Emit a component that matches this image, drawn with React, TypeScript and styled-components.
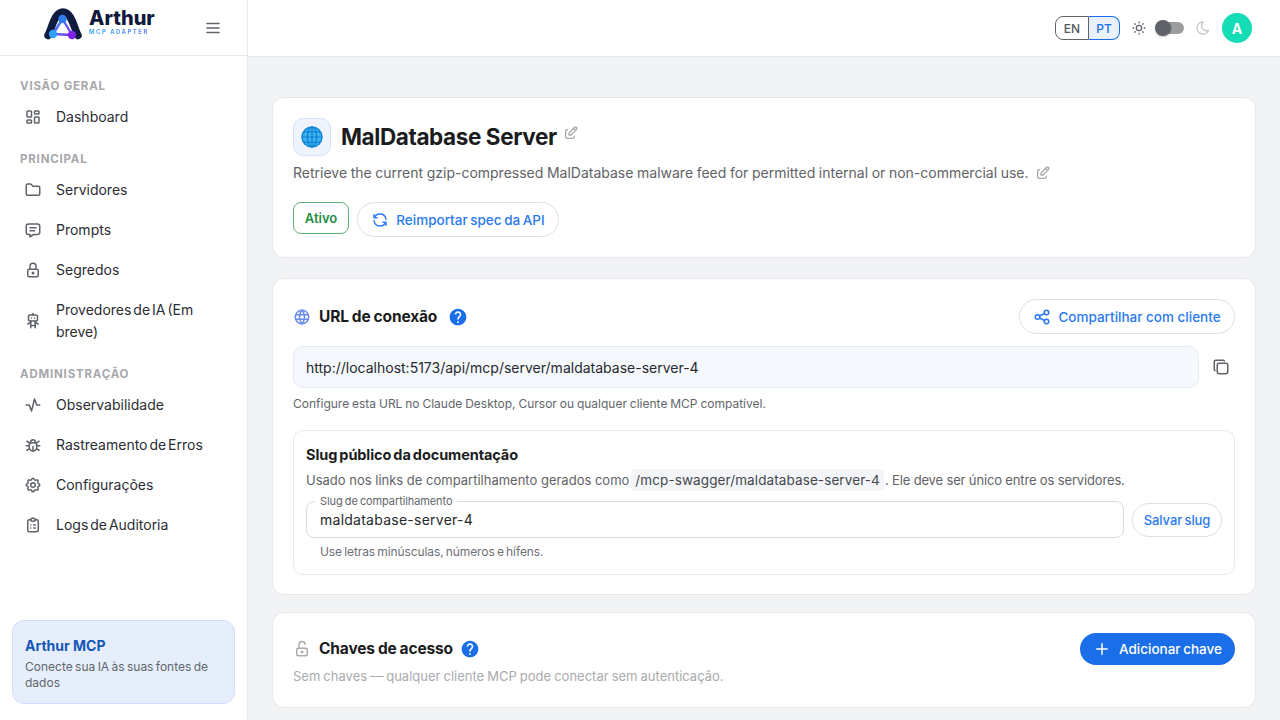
import React from 'react';
import styled, { createGlobalStyle } from 'styled-components';
import {
    TbLayoutDashboard, TbFolder, TbMessage, TbLock, TbRobot, TbActivity, TbBug, TbSettings,
    TbClipboardList, TbMenu2, TbSun, TbMoon, TbEdit, TbRefresh, TbWorld, TbShare, TbCopy, TbLockOpen, TbPlus,
} from 'react-icons/tb';
import { MdHelp } from 'react-icons/md';

const GlobalStyle = createGlobalStyle`
* { box-sizing: border-box; }
html, body { margin: 0; height: 720px; overflow: hidden; }
body { font-family: Inter, "Liberation Sans", sans-serif; background: #f2f3f5; color: #1a1c20; }
`;

const Page = styled.div`
display: flex;
height: 720px;
`;

const Sidebar = styled.aside`
width: 248px;
flex: none;
display: flex;
flex-direction: column;
background: #fff;
border-right: 1px solid #e5e7ea;
`;

const Brand = styled.div`
height: 56px;
flex: none;
display: flex;
align-items: center;
padding: 0 25px 8px 44px;
border-bottom: 1px solid #e5e7ea;
color: #5f6368;
`;

const BrandText = styled.div`
margin: -3px 0 0 7px;
display: flex;
flex-direction: column;
flex: 1;
`;

const BrandName = styled.div`
font-size: 20px;
line-height: 19px;
font-weight: 800;
color: #111a3d;
`;

const BrandSub = styled.div`
font-size: 6px;
line-height: 7px;
font-weight: 700;
letter-spacing: 1.45px;
white-space: nowrap;
background: linear-gradient(90deg, #38a4f8, #8a5cf6);
-webkit-background-clip: text;
background-clip: text;
color: transparent;
`;

const MenuIcon = styled(TbMenu2)`
flex: none;
font-size: 18px;
margin-bottom: -8px;
`;

const Nav = styled.nav`
flex: 1;
padding-top: 19px;
display: flex;
flex-direction: column;
`;

const NavLabel = styled.div`
font-size: 11.5px;
line-height: 22px;
font-weight: 700;
letter-spacing: 0.8px;
color: #a6a8ab;
padding-left: 20px;
&:not(:first-child) { margin-top: 11px; }
`;

const NavItem = styled.a`
display: flex;
align-items: center;
min-height: 40px;
padding: 0 24px;
font-size: 14px;
line-height: 22px;
word-spacing: -2px;
color: #2b2d33;
svg { flex: none; font-size: 18px; color: #5f6368; margin-right: 14px; }
`;

const TallNavItem = styled(NavItem)`
padding-top: 9px;
padding-bottom: 9px;
`;

const Promo = styled.div`
margin: 0 12px 16px;
height: 84px;
padding: 16px 12px 0;
background: #e6eefc;
border: 1px solid #cfdefa;
border-radius: 12px;
`;

const PromoTitle = styled.div`
font-size: 14px;
line-height: 18px;
font-weight: 700;
color: #1557b8;
`;

const PromoText = styled.div`
margin-top: 4px;
font-size: 12px;
line-height: 16px;
word-spacing: -1px;
color: #62666c;
`;

const Content = styled.div`
flex: 1;
min-width: 0;
display: flex;
flex-direction: column;
`;

const TopBar = styled.header`
height: 57px;
flex: none;
display: flex;
align-items: center;
justify-content: flex-end;
padding-right: 28px;
background: #fff;
border-bottom: 1px solid #e5e7ea;
`;

const LangGroup = styled.div`
display: flex;
margin-right: 11px;
`;

const LangButton = styled.span<{ $active?: boolean }>`
height: 24px;
display: flex;
align-items: center;
justify-content: center;
font-size: 12px;
font-weight: 500;
width: ${p => (p.$active ? '31px' : '34px')};
color: ${p => (p.$active ? '#1a6fe8' : '#555a60')};
background: ${p => (p.$active ? '#e9f1fd' : '#fff')};
border: 1px solid ${p => (p.$active ? '#1a6fe8' : '#5f6368')};
border-radius: ${p => (p.$active ? '0 8px 8px 0' : '8px 0 0 8px')};
${p => (p.$active ? 'border-left: 0;' : '')}
`;

const ThemeIcon = styled.span<{ $muted?: boolean }>`
display: flex;
font-size: 16px;
color: ${p => (p.$muted ? '#c4c6c9' : '#5f6368')};
`;

const Toggle = styled.span`
position: relative;
width: 24px;
height: 12px;
margin: 0 11px 0 13px;
background: #9b9d9f;
border-radius: 6px;
`;

const Thumb = styled.span`
position: absolute;
left: -5px;
top: -2px;
width: 16px;
height: 16px;
border-radius: 50%;
background: #5f6368;
box-shadow: 0 1px 2px rgba(0, 0, 0, 0.25);
`;

const Avatar = styled.span`
width: 30px;
height: 30px;
margin-left: 11px;
border-radius: 50%;
display: flex;
align-items: center;
justify-content: center;
background: #14dcb4;
color: #fff;
font-size: 14px;
font-weight: 700;
`;

const Main = styled.main`
flex: 1;
padding: 40px 24px 0;
display: flex;
flex-direction: column;
overflow: hidden;
`;

const Card = styled.section<{ $height: number; $gap: number }>`
flex: none;
height: ${p => p.$height}px;
margin-bottom: ${p => p.$gap}px;
padding: 20px;
background: #fff;
border: 1px solid #e6e8eb;
border-radius: 12px;
`;

const TitleRow = styled.div`
display: flex;
align-items: center;
`;

const GlobeBox = styled.div`
width: 38px;
height: 38px;
display: flex;
align-items: center;
justify-content: center;
background: #eef3fe;
border: 1px solid #d6e2fb;
border-radius: 10px;
`;

const ServerName = styled.h1`
margin: 0 0 0 10px;
font-size: 22.5px;
line-height: 38px;
font-weight: 700;
letter-spacing: -0.4px;
color: #1a1c20;
`;

const EditIcon = styled(TbEdit)`
flex: none;
font-size: 16px;
color: #a9abae;
`;

const TitleEdit = styled(EditIcon)`
margin: -8px 0 0 6px;
`;

const Description = styled.p`
margin: 6px 0 0;
display: flex;
align-items: center;
font-size: 14px;
line-height: 22px;
word-spacing: -0.35px;
color: #5f6368;
svg { margin-left: 6px; }
`;

const ChipRow = styled.div`
display: flex;
align-items: flex-start;
gap: 8px;
margin-top: 18px;
`;

const StatusChip = styled.span`
width: 56px;
height: 32px;
display: flex;
align-items: center;
justify-content: center;
border: 1px solid #5bb27a;
border-radius: 8px;
color: #1f8f45;
font-size: 13px;
font-weight: 600;
`;

const OutlineButton = styled.button<{ $width: number; $tight?: boolean }>`
width: ${p => p.$width}px;
height: 35px;
flex: none;
display: flex;
align-items: center;
justify-content: center;
gap: 7px;
padding: 0;
font: inherit;
font-size: 13.5px;
font-weight: 500;
word-spacing: ${p => (p.$tight ? '-1px' : '0')};
color: #2a7af0;
background: #fff;
border: 1px solid #dcdfe3;
border-radius: 18px;
svg { font-size: 18px; flex: none; }
`;

const SectionHead = styled.div`
display: flex;
align-items: center;
justify-content: space-between;
height: 35px;
`;

const SectionTitle = styled.h2`
margin: 0;
display: flex;
align-items: center;
font-size: 15.5px;
line-height: 22px;
font-weight: 700;
letter-spacing: -0.15px;
word-spacing: -0.5px;
color: #1a1c20;
`;

const SectionIcon = styled.span<{ $color: string }>`
display: flex;
width: 18px;
margin-right: 8px;
font-size: 18px;
color: ${p => p.$color};
`;

const HelpIcon = styled(MdHelp)<{ $gap: number }>`
margin-left: ${p => p.$gap}px;
font-size: 20px;
color: #1a6fe8;
`;

const UrlRow = styled.div`
display: flex;
align-items: center;
margin-top: 12px;
`;

const UrlBox = styled.div`
flex: 1;
height: 42px;
display: flex;
align-items: center;
padding: 0 12px;
background: #f5f8fd;
border: 1px solid #e6eaf2;
border-radius: 10px;
font-size: 14px;
color: #26282c;
`;

const CopyBox = styled.span`
width: 36px;
display: flex;
justify-content: flex-end;
padding-right: 5px;
font-size: 18px;
color: #5f6368;
`;

const Hint = styled.p`
margin: 7px 0 0;
font-size: 12px;
line-height: 18px;
word-spacing: -0.5px;
color: #62666c;
`;

const SlugPanel = styled.div`
margin-top: 17px;
height: 145px;
padding: 13px 12px 0;
border: 1px solid #e8eaed;
border-radius: 10px;
`;

const SlugTitle = styled.h3`
margin: 0;
font-size: 14.5px;
line-height: 22px;
font-weight: 700;
letter-spacing: -0.1px;
word-spacing: -1.2px;
color: #1a1c20;
`;

const SlugText = styled.p`
margin: 3px 0 0;
display: flex;
align-items: center;
font-size: 13px;
line-height: 22px;
color: #5f6368;
`;

const Code = styled.code`
margin: 0 1px 0 2px;
padding: 0 4px;
font-family: inherit;
font-size: 13.5px;
letter-spacing: 0.1px;
background: #f3f5f8;
border-radius: 4px;
color: #44474c;
`;

const SlugTail = styled.span`
letter-spacing: -0.15px;
`;

const SlugRow = styled.div`
display: flex;
align-items: center;
gap: 8px;
margin-top: 10px;
`;

const SlugField = styled.div`
position: relative;
flex: 1;
height: 37px;
display: flex;
align-items: center;
padding: 0 13px;
border: 1px solid #d9dbde;
border-radius: 8px;
font-size: 14px;
letter-spacing: 0.25px;
color: #26282c;
`;

const FloatLabel = styled.label`
position: absolute;
left: 8px;
top: -8px;
padding: 0 5px;
background: #fff;
font-size: 11px;
line-height: 14px;
letter-spacing: -0.1px;
word-spacing: -0.8px;
color: #62666c;
`;

const SaveButton = styled(OutlineButton)`
height: 34px;
font-size: 13px;
letter-spacing: -0.1px;
word-spacing: -1px;
border-radius: 17px;
`;

const SlugHelp = styled.p`
margin: 5px 0 0 14px;
font-size: 12px;
line-height: 18px;
letter-spacing: -0.1px;
word-spacing: -1px;
color: #6d7075;
`;

const KeysHead = styled(SectionHead)`
height: 32px;
`;

const AddButton = styled.button`
width: 155px;
height: 32px;
display: flex;
align-items: center;
justify-content: center;
gap: 8px;
padding: 0;
font: inherit;
font-size: 13.5px;
font-weight: 500;
word-spacing: -1px;
color: #fff;
background: #1a6fe8;
border: 0;
border-radius: 16px;
svg { font-size: 18px; }
`;

const MutedLine = styled.p`
margin: 0;
font-size: 13px;
line-height: 22px;
word-spacing: -0.6px;
color: #a9abae;
`;

function LogoMark() {
    return (
        <svg width="38" height="32" viewBox="0 0 38 32" style={{ flex: 'none' }}>
            <defs>
                <linearGradient id="tri" x1="0" y1="0" x2="1" y2="1">
                    <stop offset="0" stopColor="#2f8cf6" />
                    <stop offset="1" stopColor="#7a3cf0" />
                </linearGradient>
            </defs>
            <path d="M4 27.5 C8 20 10.5 4 19 4 C27.5 4 30 20 34 27.5" fill="none" stroke="#101b40" strokeWidth="7.5" strokeLinecap="round" />
            <path d="M18.5 11 L9 26 L28 27 Z" fill="#fff" stroke="url(#tri)" strokeWidth="2.4" strokeLinejoin="round" />
            <circle cx="18.5" cy="11" r="4.2" fill="#2f7df0" />
            <circle cx="9" cy="26" r="4.2" fill="#2fa0f8" />
            <circle cx="28" cy="27" r="4.2" fill="#7a24ea" />
        </svg>
    );
}

function GlobeEmoji() {
    return (
        <svg width="22" height="22" viewBox="0 0 22 22" fill="none">
            <circle cx="11" cy="11" r="10.5" fill="#3db4f2" />
            <g stroke="#0f7fd4" strokeWidth="1.2">
                <circle cx="11" cy="11" r="10" />
                <ellipse cx="11" cy="11" rx="4.6" ry="10" />
                <path d="M11 1V21M1 11H21M2.6 5.8H19.4M2.6 16.2H19.4" />
            </g>
        </svg>
    );
}

export default function App() {
    return (
        <Page>
            <GlobalStyle />
            <Sidebar>
                <Brand>
                    <LogoMark />
                    <BrandText>
                        <BrandName>Arthur</BrandName>
                        <BrandSub>MCP ADAPTER</BrandSub>
                    </BrandText>
                    <MenuIcon />
                </Brand>
                <Nav>
                    <NavLabel>VISÃO GERAL</NavLabel>
                    <NavItem><TbLayoutDashboard />Dashboard</NavItem>
                    <NavLabel>PRINCIPAL</NavLabel>
                    <NavItem><TbFolder />Servidores</NavItem>
                    <NavItem><TbMessage />Prompts</NavItem>
                    <NavItem><TbLock />Segredos</NavItem>
                    <TallNavItem><TbRobot />Provedores de IA (Em breve)</TallNavItem>
                    <NavLabel>ADMINISTRAÇÃO</NavLabel>
                    <NavItem><TbActivity />Observabilidade</NavItem>
                    <NavItem><TbBug />Rastreamento de Erros</NavItem>
                    <NavItem><TbSettings />Configurações</NavItem>
                    <NavItem><TbClipboardList />Logs de Auditoria</NavItem>
                </Nav>
                <Promo>
                    <PromoTitle>Arthur MCP</PromoTitle>
                    <PromoText>Conecte sua IA às suas fontes de dados</PromoText>
                </Promo>
            </Sidebar>
            <Content>
                <TopBar>
                    <LangGroup>
                        <LangButton>EN</LangButton>
                        <LangButton $active>PT</LangButton>
                    </LangGroup>
                    <ThemeIcon><TbSun /></ThemeIcon>
                    <Toggle><Thumb /></Toggle>
                    <ThemeIcon $muted><TbMoon /></ThemeIcon>
                    <Avatar>A</Avatar>
                </TopBar>
                <Main>
                    <Card $height={161} $gap={20}>
                        <TitleRow>
                            <GlobeBox><GlobeEmoji /></GlobeBox>
                            <ServerName>MalDatabase Server</ServerName>
                            <TitleEdit />
                        </TitleRow>
                        <Description>
                            Retrieve the current gzip-compressed MalDatabase malware feed for permitted internal or non-commercial use.
                            <EditIcon />
                        </Description>
                        <ChipRow>
                            <StatusChip>Ativo</StatusChip>
                            <OutlineButton $width={202} $tight><TbRefresh />Reimportar spec da API</OutlineButton>
                        </ChipRow>
                    </Card>
                    <Card $height={317} $gap={17}>
                        <SectionHead>
                            <SectionTitle>
                                <SectionIcon $color="#6a8ee8"><TbWorld /></SectionIcon>
                                URL de conexão
                                <HelpIcon $gap={11} />
                            </SectionTitle>
                            <OutlineButton $width={216}><TbShare />Compartilhar com cliente</OutlineButton>
                        </SectionHead>
                        <UrlRow>
                            <UrlBox>http://localhost:5173/api/mcp/server/maldatabase-server-4</UrlBox>
                            <CopyBox><TbCopy /></CopyBox>
                        </UrlRow>
                        <Hint>Configure esta URL no Claude Desktop, Cursor ou qualquer cliente MCP compatível.</Hint>
                        <SlugPanel>
                            <SlugTitle>Slug público da documentação</SlugTitle>
                            <SlugText>
                                Usado nos links de compartilhamento gerados como
                                <Code>/mcp-swagger/maldatabase-server-4</Code>
                                <SlugTail>. Ele deve ser único entre os servidores.</SlugTail>
                            </SlugText>
                            <SlugRow>
                                <SlugField>
                                    <FloatLabel>Slug de compartilhamento</FloatLabel>
                                    maldatabase-server-4
                                </SlugField>
                                <SaveButton $width={90}>Salvar slug</SaveButton>
                            </SlugRow>
                            <SlugHelp>Use letras minúsculas, números e hífens.</SlugHelp>
                        </SlugPanel>
                    </Card>
                    <Card $height={96} $gap={0}>
                        <KeysHead>
                            <SectionTitle>
                                <SectionIcon $color="#a9abae"><TbLockOpen /></SectionIcon>
                                Chaves de acesso
                                <HelpIcon $gap={7} />
                            </SectionTitle>
                            <AddButton><TbPlus />Adicionar chave</AddButton>
                        </KeysHead>
                        <MutedLine>Sem chaves — qualquer cliente MCP pode conectar sem autenticação.</MutedLine>
                    </Card>
                </Main>
            </Content>
        </Page>
    );
}
